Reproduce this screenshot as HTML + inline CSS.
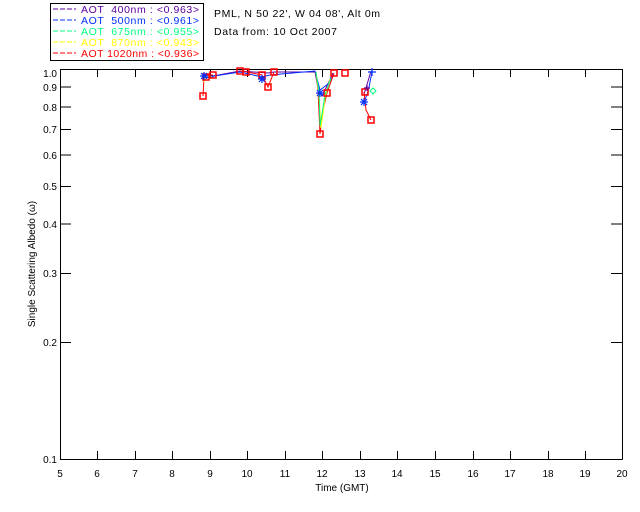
<!DOCTYPE html>
<html><head><style>
body{margin:0;background:#fff;}
svg{display:block;font-family:"Liberation Sans",sans-serif;}
text{white-space:pre;}
</style></head><body>
<svg width="640" height="512" viewBox="0 0 640 512" xmlns="http://www.w3.org/2000/svg" xml:space="preserve">
<rect width="640" height="512" fill="#fff"/>
<rect x="50.5" y="3.5" width="153" height="57" fill="#fff" stroke="#000"/>
<g font-size="10.5">
<line x1="53" y1="9" x2="76" y2="9" stroke="#6000a0" stroke-dasharray="5,2"/>
<text x="81" y="13" fill="#6000a0" textLength="118" lengthAdjust="spacing">AOT  400nm : &lt;0.963&gt;</text>
<line x1="53" y1="20" x2="76" y2="20" stroke="#0030ff" stroke-dasharray="5,2"/>
<text x="81" y="24" fill="#0030ff" textLength="118" lengthAdjust="spacing">AOT  500nm : &lt;0.961&gt;</text>
<line x1="53" y1="31" x2="76" y2="31" stroke="#00ff80" stroke-dasharray="5,2"/>
<text x="81" y="35" fill="#00ff80" textLength="118" lengthAdjust="spacing">AOT  675nm : &lt;0.955&gt;</text>
<line x1="53" y1="42" x2="76" y2="42" stroke="#ffff00" stroke-dasharray="5,2"/>
<text x="81" y="46" fill="#ffff00" textLength="118" lengthAdjust="spacing">AOT  870nm : &lt;0.943&gt;</text>
<line x1="53" y1="53" x2="76" y2="53" stroke="#ff0000" stroke-dasharray="5,2"/>
<text x="81" y="57" fill="#ff0000" textLength="118" lengthAdjust="spacing">AOT 1020nm : &lt;0.936&gt;</text>
</g>
<g font-size="10.5" fill="#000">
<text x="214" y="17" textLength="166" lengthAdjust="spacing">PML, N 50 22', W 04 08', Alt 0m</text>
<text x="214" y="35" textLength="123" lengthAdjust="spacing">Data from: 10 Oct 2007</text>
</g>
<g stroke="#000" fill="none">
<line x1="60.5" y1="69" x2="60.5" y2="459.5"/>
<line x1="60" y1="459.5" x2="622.5" y2="459.5"/>
<line x1="60" y1="69.5" x2="622.5" y2="69.5"/>
<line x1="622.5" y1="69" x2="622.5" y2="459.5"/>
<path d="M97.5 459v-8M135.5 459v-8M172.5 459v-8M210.5 459v-8M247.5 459v-8M285.5 459v-8M322.5 459v-8M360.5 459v-8M397.5 459v-8M435.5 459v-8M473.5 459v-8M510.5 459v-8M548.5 459v-8M585.5 459v-8"/>
<path d="M97.5 69v8M135.5 69v8M172.5 69v8M210.5 69v8M247.5 69v8M285.5 69v8M322.5 69v8M360.5 69v8M397.5 69v8M435.5 69v8M473.5 69v8M510.5 69v8M548.5 69v8M585.5 69v8"/>
<path d="M60 87h11M60 107h11M60 129.5h11M60 155h11M60 186.5h11M60 224h11M60 273.5h11M60 342.5h11M611 87h11M611 107h11M611 129.5h11M611 155h11M611 186.5h11M611 224h11M611 273.5h11M611 342.5h11"/>
</g>
<g font-size="10" fill="#000" text-anchor="end">
<text x="57" y="77">1.0</text><text x="57" y="91">0.9</text><text x="57" y="111">0.8</text>
<text x="57" y="133">0.7</text><text x="57" y="159">0.6</text><text x="57" y="190">0.5</text>
<text x="57" y="228">0.4</text><text x="57" y="277">0.3</text><text x="57" y="346">0.2</text>
<text x="57" y="463">0.1</text>
</g>
<g font-size="10" fill="#000" text-anchor="middle">
<text x="60" y="477">5</text><text x="97" y="477">6</text><text x="135" y="477">7</text><text x="172" y="477">8</text>
<text x="210" y="477">9</text><text x="247" y="477">10</text><text x="285" y="477">11</text><text x="322" y="477">12</text>
<text x="360" y="477">13</text><text x="397" y="477">14</text><text x="435" y="477">15</text><text x="473" y="477">16</text>
<text x="510" y="477">17</text><text x="548" y="477">18</text><text x="585" y="477">19</text><text x="622" y="477">20</text>
<text x="342" y="491">Time (GMT)</text>
</g>
<text transform="translate(35,264) rotate(-90)" font-size="10" text-anchor="middle" fill="#000">Single Scattering Albedo (ω)</text>
<g fill="none" stroke-width="1">
<polyline stroke="#ff0000" points="203,96 204,78 206,75 213,75"/>
<polyline stroke="#ffff00" points="204,82 206,76 212,76"/>
<polyline stroke="#6000a0" points="203,76 207,74 213,76 240,71 268,73 274,72 315,72 318,88 322,96 325,90 333,73"/>
<polyline stroke="#0030ff" points="204,77 210,78 214,76 240,72 262,77 270,75 315,71 320,90 328,84 334,75"/>
<polyline stroke="#ff0000" points="240,71 247,72 262,75 268,87 274,72"/>
<polyline stroke="#ff0000" points="316,72 318,90 320,134 323,110 327,93 334,73"/>
<polyline stroke="#ffff00" points="316,72 319,95 321,128 325,98 330,79"/>
<polyline stroke="#00ff80" points="316,72 319,92 320,126 325,95 331,78"/>
<polyline stroke="#6000a0" points="371,71 366,88 364,94"/>
<polyline stroke="#0030ff" points="372,72 368,92 364,102"/>
<polyline stroke="#ff0000" points="364,92 366,110 371,120"/>
</g>
<g fill="none" stroke="#ff0000" stroke-width="1.5">
<rect x="200" y="93" width="6" height="6"/><rect x="210" y="72" width="6" height="6"/>
<rect x="203" y="74" width="6" height="6"/><rect x="237" y="68" width="6" height="6"/>
<rect x="243" y="69" width="6" height="6"/><rect x="259" y="72" width="6" height="6"/>
<rect x="265" y="84" width="6" height="6"/><rect x="271" y="69" width="6" height="6"/>
<rect x="317" y="131" width="6" height="6"/><rect x="324" y="90" width="6" height="6"/>
<rect x="331" y="70" width="6" height="6"/><rect x="342" y="70" width="6" height="6"/>
<rect x="362" y="89" width="6" height="6"/><rect x="368" y="117" width="6" height="6"/>
</g>
<g stroke="#0030ff" stroke-width="1.2">
<path d="M200 76h8M204 72v8M201 73l6 6M207 73l-6 6"/>
<path d="M258 79h8M262 75v8M259 76l6 6M265 76l-6 6"/>
<path d="M316 93h8M320 89v8M317 90l6 6M323 90l-6 6"/>
<path d="M360 102h8M364 98v8M361 99l6 6M367 99l-6 6"/>
<path d="M368 72h8M372 68v8"/>
</g>
<path d="M370 91l3-3 3 3-3 3z" fill="none" stroke="#00ff80"/>
<path d="M364 88h6M367 85v6" stroke="#6000a0" stroke-width="1.2"/>
</svg>
</body></html>
